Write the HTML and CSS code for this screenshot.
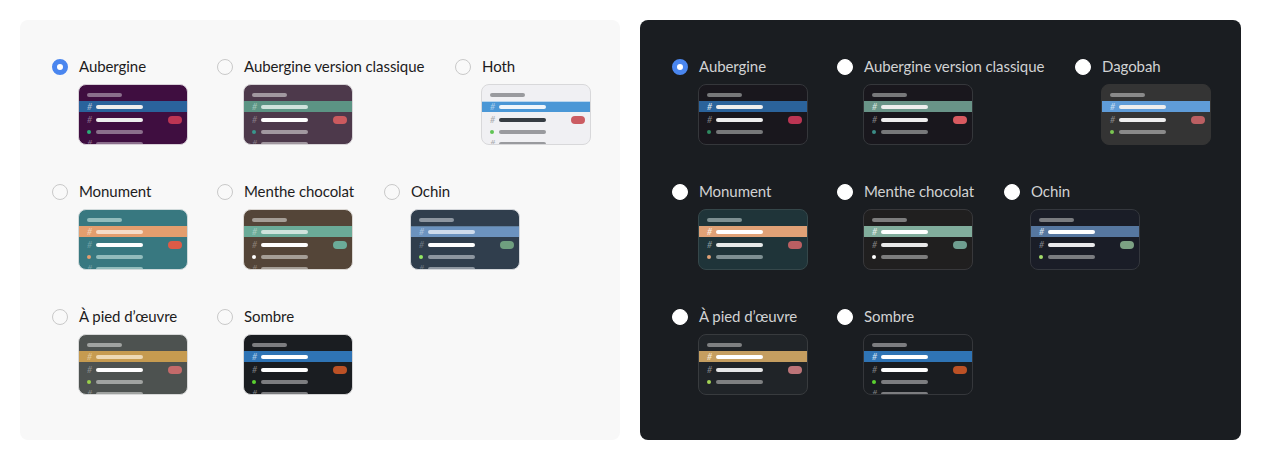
FILE: index.html
```html
<!DOCTYPE html>
<html lang="fr">
<head>
<meta charset="utf-8">
<title>Thèmes</title>
<link rel="stylesheet" href="styles.css">
</head>
<body>
<main class="page">
  <section class="panel panel-light">
    <div class="line">
      <div class="item col-a"><span class="radio radio-on"></span><div class="body"><div class="name">Aubergine</div>
        <div class="preview l-aubergine"><div class="head"></div><div class="chan sel"><span class="hash">#</span><span class="bar"></span></div><div class="chan"><span class="hash">#</span><span class="bar"></span><span class="pill"></span></div><div class="chan dm"><span class="dot"></span><span class="bar"></span></div><div class="chan dm"><span class="hash">#</span><span class="bar"></span></div></div></div></div>
      <div class="item col-b"><span class="radio"></span><div class="body"><div class="name">Aubergine version classique</div>
        <div class="preview l-classic"><div class="head"></div><div class="chan sel"><span class="hash">#</span><span class="bar"></span></div><div class="chan"><span class="hash">#</span><span class="bar"></span><span class="pill"></span></div><div class="chan dm"><span class="dot"></span><span class="bar"></span></div><div class="chan dm"><span class="hash">#</span><span class="bar"></span></div></div></div></div>
      <div class="item"><span class="radio"></span><div class="body"><div class="name">Hoth</div>
        <div class="preview l-hoth"><div class="head"></div><div class="chan sel"><span class="hash">#</span><span class="bar"></span></div><div class="chan"><span class="hash">#</span><span class="bar"></span><span class="pill"></span></div><div class="chan dm"><span class="dot"></span><span class="bar"></span></div><div class="chan dm"><span class="hash">#</span><span class="bar"></span></div></div></div></div>
    </div>
    <div class="line">
      <div class="item col-a"><span class="radio"></span><div class="body"><div class="name">Monument</div>
        <div class="preview l-monument"><div class="head"></div><div class="chan sel"><span class="hash">#</span><span class="bar"></span></div><div class="chan"><span class="hash">#</span><span class="bar"></span><span class="pill"></span></div><div class="chan dm"><span class="dot"></span><span class="bar"></span></div><div class="chan dm"><span class="hash">#</span><span class="bar"></span></div></div></div></div>
      <div class="item col-c"><span class="radio"></span><div class="body"><div class="name">Menthe chocolat</div>
        <div class="preview l-mint"><div class="head"></div><div class="chan sel"><span class="hash">#</span><span class="bar"></span></div><div class="chan"><span class="hash">#</span><span class="bar"></span><span class="pill"></span></div><div class="chan dm"><span class="dot"></span><span class="bar"></span></div><div class="chan dm"><span class="hash">#</span><span class="bar"></span></div></div></div></div>
      <div class="item"><span class="radio"></span><div class="body"><div class="name">Ochin</div>
        <div class="preview l-ochin"><div class="head"></div><div class="chan sel"><span class="hash">#</span><span class="bar"></span></div><div class="chan"><span class="hash">#</span><span class="bar"></span><span class="pill"></span></div><div class="chan dm"><span class="dot"></span><span class="bar"></span></div><div class="chan dm"><span class="hash">#</span><span class="bar"></span></div></div></div></div>
    </div>
    <div class="line">
      <div class="item col-a"><span class="radio"></span><div class="body"><div class="name">À pied d’œuvre</div>
        <div class="preview l-work"><div class="head"></div><div class="chan sel"><span class="hash">#</span><span class="bar"></span></div><div class="chan"><span class="hash">#</span><span class="bar"></span><span class="pill"></span></div><div class="chan dm"><span class="dot"></span><span class="bar"></span></div><div class="chan dm"><span class="hash">#</span><span class="bar"></span></div></div></div></div>
      <div class="item"><span class="radio"></span><div class="body"><div class="name">Sombre</div>
        <div class="preview l-dark"><div class="head"></div><div class="chan sel"><span class="hash">#</span><span class="bar"></span></div><div class="chan"><span class="hash">#</span><span class="bar"></span><span class="pill"></span></div><div class="chan dm"><span class="dot"></span><span class="bar"></span></div><div class="chan dm"><span class="hash">#</span><span class="bar"></span></div></div></div></div>
    </div>
  </section>
  <section class="panel panel-dark">
    <div class="line">
      <div class="item col-a"><span class="radio radio-on"></span><div class="body"><div class="name">Aubergine</div>
        <div class="preview d-aubergine"><div class="head"></div><div class="chan sel"><span class="hash">#</span><span class="bar"></span></div><div class="chan"><span class="hash">#</span><span class="bar"></span><span class="pill"></span></div><div class="chan dm"><span class="dot"></span><span class="bar"></span></div></div></div></div>
      <div class="item col-b"><span class="radio"></span><div class="body"><div class="name">Aubergine version classique</div>
        <div class="preview d-classic"><div class="head"></div><div class="chan sel"><span class="hash">#</span><span class="bar"></span></div><div class="chan"><span class="hash">#</span><span class="bar"></span><span class="pill"></span></div><div class="chan dm"><span class="dot"></span><span class="bar"></span></div></div></div></div>
      <div class="item"><span class="radio"></span><div class="body"><div class="name">Dagobah</div>
        <div class="preview d-dagobah"><div class="head"></div><div class="chan sel"><span class="hash">#</span><span class="bar"></span></div><div class="chan"><span class="hash">#</span><span class="bar"></span><span class="pill"></span></div><div class="chan dm"><span class="dot"></span><span class="bar"></span></div></div></div></div>
    </div>
    <div class="line">
      <div class="item col-a"><span class="radio"></span><div class="body"><div class="name">Monument</div>
        <div class="preview d-monument"><div class="head"></div><div class="chan sel"><span class="hash">#</span><span class="bar"></span></div><div class="chan"><span class="hash">#</span><span class="bar"></span><span class="pill"></span></div><div class="chan dm"><span class="dot"></span><span class="bar"></span></div></div></div></div>
      <div class="item col-c"><span class="radio"></span><div class="body"><div class="name">Menthe chocolat</div>
        <div class="preview d-mint"><div class="head"></div><div class="chan sel"><span class="hash">#</span><span class="bar"></span></div><div class="chan"><span class="hash">#</span><span class="bar"></span><span class="pill"></span></div><div class="chan dm"><span class="dot"></span><span class="bar"></span></div></div></div></div>
      <div class="item"><span class="radio"></span><div class="body"><div class="name">Ochin</div>
        <div class="preview d-ochin"><div class="head"></div><div class="chan sel"><span class="hash">#</span><span class="bar"></span></div><div class="chan"><span class="hash">#</span><span class="bar"></span><span class="pill"></span></div><div class="chan dm"><span class="dot"></span><span class="bar"></span></div></div></div></div>
    </div>
    <div class="line">
      <div class="item col-a"><span class="radio"></span><div class="body"><div class="name">À pied d’œuvre</div>
        <div class="preview d-work"><div class="head"></div><div class="chan sel"><span class="hash">#</span><span class="bar"></span></div><div class="chan"><span class="hash">#</span><span class="bar"></span><span class="pill"></span></div><div class="chan dm"><span class="dot"></span><span class="bar"></span></div></div></div></div>
      <div class="item"><span class="radio"></span><div class="body"><div class="name">Sombre</div>
        <div class="preview d-dark"><div class="head"></div><div class="chan sel"><span class="hash">#</span><span class="bar"></span></div><div class="chan"><span class="hash">#</span><span class="bar"></span><span class="pill"></span></div><div class="chan dm"><span class="dot"></span><span class="bar"></span></div><div class="chan dm"><span class="hash">#</span><span class="bar"></span></div></div></div></div>
    </div>
  </section>
</main>
</body>
</html>
```
FILE: styles.css
```css
* { box-sizing: border-box; }
html, body { margin: 0; height: 100%; background: #fff; }
body { font-family: Lato, "Liberation Sans", sans-serif; }

.page {
  display: grid;
  grid-template-columns: 600px 601px;
  gap: 20px;
  height: 460px;
  padding: 20px;
}
.panel {
  display: flex;
  flex-direction: column;
  gap: 37px;
  padding: 36px 32px;
  border-radius: 8px;
  overflow: hidden;
}
.panel-light { background: #f8f8f8; color: #1d1c1d; }
.panel-dark { background: #1a1d21; color: #d1d2d3; }

.line { display: flex; height: 88px; }
.item { display: flex; gap: 11px; flex: none; }
.col-a { width: 165px; }
.col-b { width: 238px; }
.col-c { width: 167px; }

.radio {
  flex: none;
  width: 16px;
  height: 16px;
  margin-top: 3px;
  border-radius: 50%;
  border: 1px solid #c9c9c9;
  background: #f9f9f9;
}
.panel-dark .radio { background: #fff; border-color: #fff; }
.panel .radio-on { background: #fff; border: 5px solid #4a86ef; }

.name {
  font-size: 15px;
  line-height: 20px;
  letter-spacing: -0.07px;
  white-space: nowrap;
}

.preview {
  display: flex;
  flex-direction: column;
  width: 110px;
  height: 61px;
  margin-top: 8px;
  margin-left: -1px;
  padding-top: 8px;
  border: 1px solid var(--edge);
  border-radius: 8px;
  background: var(--bg);
  overflow: hidden;
}
.head {
  flex: none;
  width: 35px;
  height: 4px;
  margin: 0 0 4px 8px;
  border-radius: 2px;
  background: var(--muted);
}
.chan {
  flex: none;
  display: flex;
  align-items: center;
  height: 12px;
  padding-left: 8px;
}
.chan.sel {
  height: 11px;
  margin-bottom: 2px;
  background: var(--sel);
  box-shadow: inset 0 1px 0 var(--seledge);
}
.hash {
  flex: none;
  width: 8.5px;
  font-size: 9px;
  font-style: italic;
  line-height: 12px;
  color: var(--hash);
}
.bar {
  flex: none;
  width: 47px;
  height: 4px;
  border-radius: 2px;
  background: var(--strong);
}
.sel .bar { background: var(--selbar); }
.sel .hash { color: var(--selhash); }
.dm .bar { background: var(--muted); }
.pill {
  flex: none;
  width: 14px;
  height: 8px;
  margin-left: 25px;
  border-radius: 4px;
  background: var(--pill);
}
.dot {
  flex: none;
  width: 4px;
  height: 4px;
  margin-right: 4.5px;
  border-radius: 50%;
  background: var(--dot);
}

.l-aubergine { --bg:#3f0e40; --edge:#d8d0d8; --sel:#2a639c; --seledge:#2a639c; --selbar:#eeeeee; --selhash:#a9bdd2; --strong:#eeeeee; --muted:#8b6f8c; --hash:#8b6f8c; --pill:#bc3553; --dot:#2bac76; }
.l-classic { --bg:#4d394b; --edge:#d8d5d8; --sel:#5c9484; --seledge:#5c9484; --selbar:#cfe3dc; --selhash:#9fc4b9; --strong:#ffffff; --muted:#a198a0; --hash:#857985; --pill:#cb5a5e; --dot:#38978d; }
.l-hoth { --bg:#f0f0f3; --edge:#d8d8da; --sel:#4a97d6; --seledge:#b9d6ee; --selbar:#f0f6fb; --selhash:#a9cdeb; --strong:#363c42; --muted:#999a9e; --hash:#a9aaae; --pill:#cb5c62; --dot:#60c454; }
.l-monument { --bg:#387880; --edge:#d0dadb; --sel:#e49e6e; --seledge:#e49e6e; --selbar:#f6dcc8; --selhash:#f2cfb6; --strong:#ffffff; --muted:#92bcbc; --hash:#6fa0a4; --pill:#dd5b47; --dot:#e49e6e; }
.l-mint { --bg:#544538; --edge:#dad7d3; --sel:#6bab98; --seledge:#6bab98; --selbar:#cfe3dc; --selhash:#a6ccc0; --strong:#ffffff; --muted:#a59e96; --hash:#8a7f75; --pill:#6bab98; --dot:#ffffff; }
.l-ochin { --bg:#303e4d; --edge:#d3d6da; --sel:#6c93bf; --seledge:#5f7f9f; --selbar:#cfdcec; --selhash:#a9c1dc; --strong:#ffffff; --muted:#8d96a0; --hash:#6a7581; --pill:#6f9f7f; --dot:#94e864; }
.l-work { --bg:#4d5250; --edge:#d8d9d9; --sel:#c69b50; --seledge:#c69b50; --selbar:#edd9b5; --selhash:#dfc699; --strong:#ffffff; --muted:#a0a3a1; --hash:#8a8d8b; --pill:#c46a6a; --dot:#99d04a; }
.l-dark { --bg:#1a1d21; --edge:#d5d5d6; --sel:#2f74b5; --seledge:#2f74b5; --selbar:#ffffff; --selhash:#a9c8e4; --strong:#ffffff; --muted:#7c7d80; --hash:#7c7d80; --pill:#bc5125; --dot:#5ad130; }

.d-aubergine { --bg:#19171d; --edge:#35373b; --sel:#2b639b; --seledge:#2b639b; --selbar:#eeeeee; --selhash:#dfe6ee; --strong:#eeeeee; --muted:#77787a; --hash:#808083; --pill:#bc3553; --dot:#2f8a60; }
.d-classic { --bg:#19171d; --edge:#35373b; --sel:#699488; --seledge:#699488; --selbar:#eeeeee; --selhash:#d5e3df; --strong:#eeeeee; --muted:#77787a; --hash:#808083; --pill:#d85a60; --dot:#3b8c86; }
.d-dagobah { --bg:#343434; --edge:#343434; --sel:#5f9cd8; --seledge:#5f9cd8; --selbar:#eeeeee; --selhash:#c7dcf1; --strong:#eeeeee; --muted:#8a8a8a; --hash:#8a8a8a; --pill:#bb5f62; --dot:#7ac651; }
.d-monument { --bg:#1f3439; --edge:#35474a; --sel:#e0a176; --seledge:#e0a176; --selbar:#ffffff; --selhash:#fbeee4; --strong:#e6e9e9; --muted:#7e8f92; --hash:#86989b; --pill:#bb5f62; --dot:#e0a176; }
.d-mint { --bg:#201f1f; --edge:#38383b; --sel:#81ad9c; --seledge:#81ad9c; --selbar:#ffffff; --selhash:#e3eeea; --strong:#e9e9e9; --muted:#7d7d7d; --hash:#808080; --pill:#6f9e90; --dot:#ffffff; }
.d-ochin { --bg:#1a1d27; --edge:#34373d; --sel:#5677a0; --seledge:#5677a0; --selbar:#ffffff; --selhash:#dbe3ed; --strong:#e9e9eb; --muted:#7a7c80; --hash:#80828a; --pill:#7ca183; --dot:#a3dc6b; }
.d-work { --bg:#202428; --edge:#383b3e; --sel:#c59e60; --seledge:#c59e60; --selbar:#ffffff; --selhash:#f4e9d6; --strong:#e6e7e8; --muted:#7e8081; --hash:#85878a; --pill:#bd7478; --dot:#a3d455; }
.d-dark { --bg:#1a1d21; --edge:#35373b; --sel:#2f74b5; --seledge:#2f74b5; --selbar:#ffffff; --selhash:#cfe0f0; --strong:#ffffff; --muted:#7c7d80; --hash:#7c7d80; --pill:#bc5125; --dot:#5ad130; }
```
